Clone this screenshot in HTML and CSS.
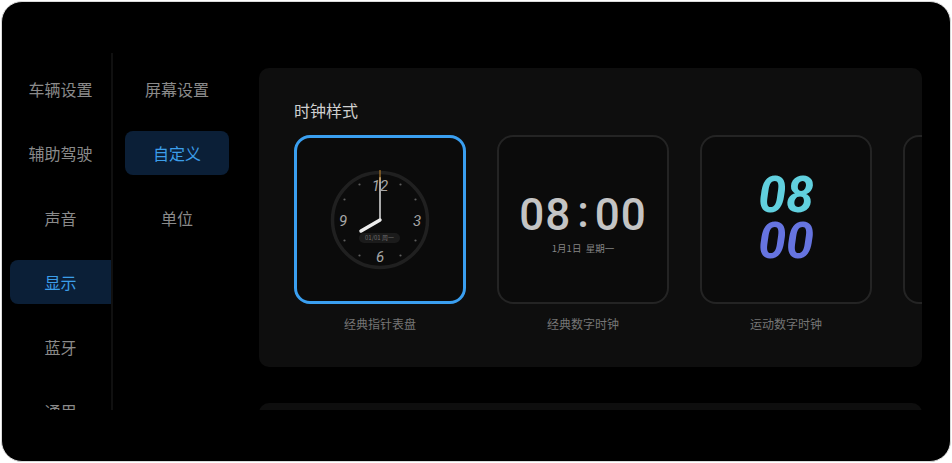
FILE: index.html
```html
<!DOCTYPE html>
<html lang="zh-CN">
<head>
<meta charset="utf-8">
<title>显示设置</title>
<link rel="stylesheet" href="styles.css">
</head>
<body>
<div class="frame">
  <div class="layout">
    <nav class="nav1">
      <div class="nav1-item">车辆设置</div>
      <div class="nav1-item">辅助驾驶</div>
      <div class="nav1-item">声音</div>
      <div class="nav1-item is-active">显示</div>
      <div class="nav1-item">蓝牙</div>
      <div class="nav1-item">通用</div>
    </nav>
    <nav class="nav2">
      <div class="nav2-item">屏幕设置</div>
      <div class="nav2-item is-active">自定义</div>
      <div class="nav2-item">单位</div>
    </nav>
    <main class="main">
      <section class="card">
        <h2 class="card-title">时钟样式</h2>
        <div class="tiles">
          <div class="tile-item">
            <div class="tile is-selected tile-analog">
              <svg class="analog" viewBox="0 0 100 100" width="100" height="100">
                <circle cx="50" cy="50" r="47.5" fill="none" stroke="#202020" stroke-width="3.5"/>
                <g fill="#5e5e5e">
                  <circle cx="70.5" cy="14.5" r="1.1"/>
                  <circle cx="85.5" cy="29.5" r="1.1"/>
                  <circle cx="85.5" cy="70.5" r="1.1"/>
                  <circle cx="70.5" cy="85.5" r="1.1"/>
                  <circle cx="29.5" cy="85.5" r="1.1"/>
                  <circle cx="14.5" cy="70.5" r="1.1"/>
                  <circle cx="14.5" cy="29.5" r="1.1"/>
                  <circle cx="29.5" cy="14.5" r="1.1"/>
                </g>
                <g class="num">
                  <text x="50" y="20.5">12</text>
                  <text x="87" y="55.5">3</text>
                  <text x="50" y="91.5">6</text>
                  <text x="13" y="55.5">9</text>
                </g>
                <rect x="29" y="63" width="41" height="10" rx="5" fill="#1b1b1b"/>
                <text class="pill" x="49.5" y="70.2">01/01 周一</text>
                <line x1="50" y1="50" x2="50" y2="8" stroke="#a9a9a9" stroke-width="2" stroke-linecap="round"/>
                <line x1="50" y1="0" x2="50" y2="12" stroke="#c98a2c" stroke-width="1"/>
                <line x1="50" y1="50" x2="31" y2="61" stroke="#ececec" stroke-width="3.5" stroke-linecap="round"/>
              </svg>
            </div>
            <div class="tile-label">经典指针表盘</div>
          </div>
          <div class="tile-item">
            <div class="tile tile-digital">
              <div class="digital-time">08<span class="colon">:</span>00</div>
              <div class="digital-date">1月1日&nbsp;&nbsp;星期一</div>
            </div>
            <div class="tile-label">经典数字时钟</div>
          </div>
          <div class="tile-item">
            <div class="tile tile-sport">
              <div class="sport-hour">08</div>
              <div class="sport-min">00</div>
            </div>
            <div class="tile-label">运动数字时钟</div>
          </div>
          <div class="tile-item">
            <div class="tile"></div>
            <div class="tile-label"></div>
          </div>
        </div>
      </section>
      <section class="card card-next"></section>
    </main>
  </div>
</div>
</body>
</html>
```
FILE: styles.css
```css
* { box-sizing: border-box; }
html, body { margin: 0; padding: 0; }
body {
  background: #ffffff;
  width: 952px;
  height: 463px;
  overflow: hidden;
  font-family: "Noto Sans CJK SC", "Noto Sans", sans-serif;
}
.frame {
  margin: 1px;
  width: 950px;
  height: 461px;
  border: 1px solid #d9d9d9;
  border-radius: 21px;
  background: #000;
  overflow: hidden;
}
.layout {
  display: flex;
  margin-top: 51px;
  height: 357px;
  overflow: hidden;
}
.nav1 {
  flex: none;
  width: 111px;
  padding-top: 14px;
  padding-left: 8px;
  border-right: 2px solid #101010;
  display: flex;
  flex-direction: column;
  gap: 20.4px;
}
.nav1-item {
  flex: none;
  height: 44px;
  line-height: 44px;
  text-align: center;
  font-size: 16px;
  color: #8a8a8a;
  border-radius: 8px 0 0 8px;
}
.nav1-item.is-active {
  background: #0b1f37;
  color: #3c9ee9;
}
.nav2 {
  flex: none;
  width: 128px;
  padding: 14px 12px 0 12px;
  display: flex;
  flex-direction: column;
  gap: 20.4px;
}
.nav2-item {
  height: 44px;
  line-height: 44px;
  text-align: center;
  font-size: 16px;
  color: #8a8a8a;
  border-radius: 8px;
}
.nav2-item.is-active {
  background: #0b1f37;
  color: #3c9ee9;
}
.main {
  flex: 1;
  min-width: 0;
  padding: 15px 28px 0 18px;
}
.card {
  background: #0e0e0e;
  border-radius: 10px;
  height: 299px;
  padding: 31px 0 0 35px;
  overflow: hidden;
}
.card-next {
  margin-top: 36px;
  height: 100px;
}
.card-title {
  margin: 0;
  font-size: 16px;
  line-height: 22px;
  font-weight: 400;
  color: #d0d0d0;
}
.tiles {
  display: flex;
  gap: 31px;
  margin-top: 14px;
}
.tile-item {
  flex: none;
  width: 172px;
}
.tile {
  height: 169px;
  border: 2px solid #242424;
  border-radius: 16px;
  background: #0b0b0b;
}
.tile.is-selected {
  border: 3px solid #3a9ff0;
}
.tile-label {
  margin-top: 12px;
  height: 16px;
  line-height: 16px;
  font-size: 12px;
  color: #757575;
  text-align: center;
}
.tile-analog {
  display: flex;
  align-items: center;
  justify-content: center;
}
.analog { overflow: visible; display: block; }
.analog .num text {
  font-family: Roboto, "Liberation Sans", sans-serif;
  font-style: italic;
  font-size: 15px;
  fill: #a6a6a6;
  text-anchor: middle;
}
.analog .pill {
  font-family: "Noto Sans CJK SC", sans-serif;
  font-size: 6px;
  fill: #6e6e6e;
  text-anchor: middle;
}
.tile-digital {
  display: flex;
  flex-direction: column;
  align-items: center;
  padding-top: 56px;
}
.digital-time {
  font-family: Roboto, "Liberation Sans", sans-serif;
  font-weight: 500;
  font-size: 44px;
  line-height: 44px;
  color: #c4c4c4;
  letter-spacing: 1px;
  white-space: nowrap;
}
.colon {
  display: inline-block;
  margin: 0 5px 0 6px;
  position: relative;
  top: -3px;
}
.digital-date {
  margin-top: 5px;
  font-size: 9.5px;
  line-height: 12px;
  color: #858585;
  white-space: nowrap;
}
.tile-sport {
  display: flex;
  flex-direction: column;
  align-items: center;
  padding-top: 35px;
  font-family: Roboto, "Liberation Sans", sans-serif;
  font-weight: 700;
  font-style: italic;
  font-size: 50px;
  line-height: 46px;
}
.sport-hour { color: #61d0de; }
.sport-min { color: #6674e0; }
```
